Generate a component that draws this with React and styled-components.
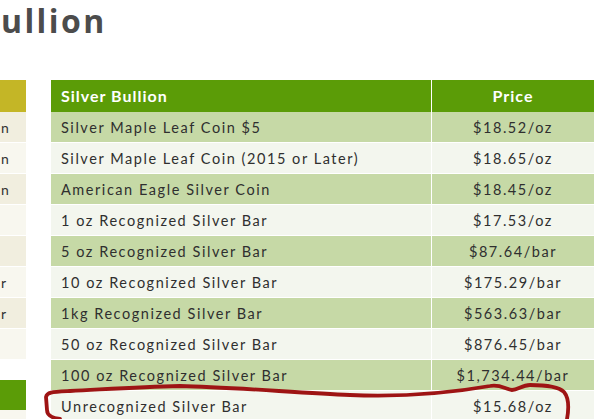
import React from "react";
import styled, { createGlobalStyle } from "styled-components";

const Global = createGlobalStyle`
  html, body { margin: 0; padding: 0; background: #fff; overflow: hidden; }
  body { width: 607px; height: 419px; font-family: "Lato", "DejaVu Sans", sans-serif; }
`;

const Page = styled.div`
  position: relative;
  width: 607px;
  height: 419px;
  overflow: hidden;
`;

const Title = styled.h1`
  margin: 0;
  height: 80px;
  padding: 2px 0 0 1px;
  box-sizing: border-box;
  font-family: "Open Sans", "DejaVu Sans", sans-serif;
  font-weight: 700;
  font-size: 32px;
  line-height: 38px;
  letter-spacing: 2.4px;
  color: #4c4c4c;
`;

const Content = styled.div`
  display: flex;
  gap: 25px;
  align-items: flex-start;
`;

const LeftColumn = styled.div`
  width: 26px;
  display: flex;
  flex-direction: column;
  gap: 20px;
`;

const SideTable = styled.div`
  display: flex;
  flex-direction: column;
`;

const SideHead = styled.div`
  height: ${(p) => p.$h}px;
  background: ${(p) => p.$color};
`;

const SideCell = styled.div`
  height: 30px;
  border-bottom: 1px solid #fff;
  background: ${(p) => (p.$alt ? "#f8f7ef" : "#f1eedf")};
  font-size: 14px;
  letter-spacing: 1.4px;
  line-height: 31px;
  color: #333;
  padding-left: 1px;
`;

const Table = styled.div`
  width: 543px;
  display: grid;
  grid-template-columns: 380px 162px;
  column-gap: 1px;
  background: #fff;
`;

const Head = styled.div`
  height: 32px;
  background: #5b9c07;
  color: #fff;
  font-weight: 700;
  font-size: 16px;
  letter-spacing: 1px;
  line-height: 32px;
  padding-left: ${(p) => (p.$center ? "0" : "10px")};
  text-align: ${(p) => (p.$center ? "center" : "left")};
`;

const Cell = styled.div`
  height: 30px;
  border-bottom: 1px solid #fff;
  background: ${(p) => (p.$odd ? "#c6d9a6" : "#f3f6ee")};
  color: #2f2f2f;
  font-size: 14.5px;
  letter-spacing: 1.55px;
  line-height: 31px;
  padding-left: ${(p) => (p.$center ? "0" : "10px")};
  text-align: ${(p) => (p.$center ? "center" : "left")};
  white-space: nowrap;
`;

const Annotation = styled.svg`
  position: absolute;
  left: 0;
  top: 0;
  pointer-events: none;
`;

const rows = [
  ["Silver Maple Leaf Coin $5", "$18.52/oz"],
  ["Silver Maple Leaf Coin (2015 or Later)", "$18.65/oz"],
  ["American Eagle Silver Coin", "$18.45/oz"],
  ["1 oz Recognized Silver Bar", "$17.53/oz"],
  ["5 oz Recognized Silver Bar", "$87.64/bar"],
  ["10 oz Recognized Silver Bar", "$175.29/bar"],
  ["1kg Recognized Silver Bar", "$563.63/bar"],
  ["50 oz Recognized Silver Bar", "$876.45/bar"],
  ["100 oz Recognized Silver Bar", "$1,734.44/bar"],
  ["Unrecognized Silver Bar", "$15.68/oz"],
];

const sideRows = ["n", "n", "n", "", "", "r", "r", ""];

export default function App() {
  return (
    <Page>
      <Global />
      <Title>ullion</Title>
      <Content>
        <LeftColumn>
          <SideTable>
            <SideHead $color="#c4b626" $h={32} />
            {sideRows.map((t, i) => (
              <SideCell key={i} $alt={i % 2 === 1}>
                {t}
              </SideCell>
            ))}
          </SideTable>
          <SideTable>
            <SideHead $color="#5b9c07" $h={30} />
            <SideCell $alt />
          </SideTable>
        </LeftColumn>
        <Table>
          <Head>Silver Bullion</Head>
          <Head $center>Price</Head>
          {rows.map(([name, price], i) => (
            <React.Fragment key={name}>
              <Cell $odd={i % 2 === 0}>{name}</Cell>
              <Cell $odd={i % 2 === 0} $center>
                {price}
              </Cell>
            </React.Fragment>
          ))}
        </Table>
      </Content>
      <Annotation width="607" height="419" viewBox="0 0 607 419">
        <path
          d="M60 419 C52 418 47 416 47 410 L46 397 C47 392 52 392 70 391 C110 389 140 387 180 386 C230 387 300 393 350 395 C400 397 450 393 490 386 C500 384 505 389 512 390 C518 390 522 385 530 385 C545 385 558 386 564 392 C569 398 569 408 567 419"
          fill="none"
          stroke="#9e1414"
          strokeWidth="3.8"
          strokeLinecap="round"
          strokeLinejoin="round"
        />
      </Annotation>
    </Page>
  );
}
